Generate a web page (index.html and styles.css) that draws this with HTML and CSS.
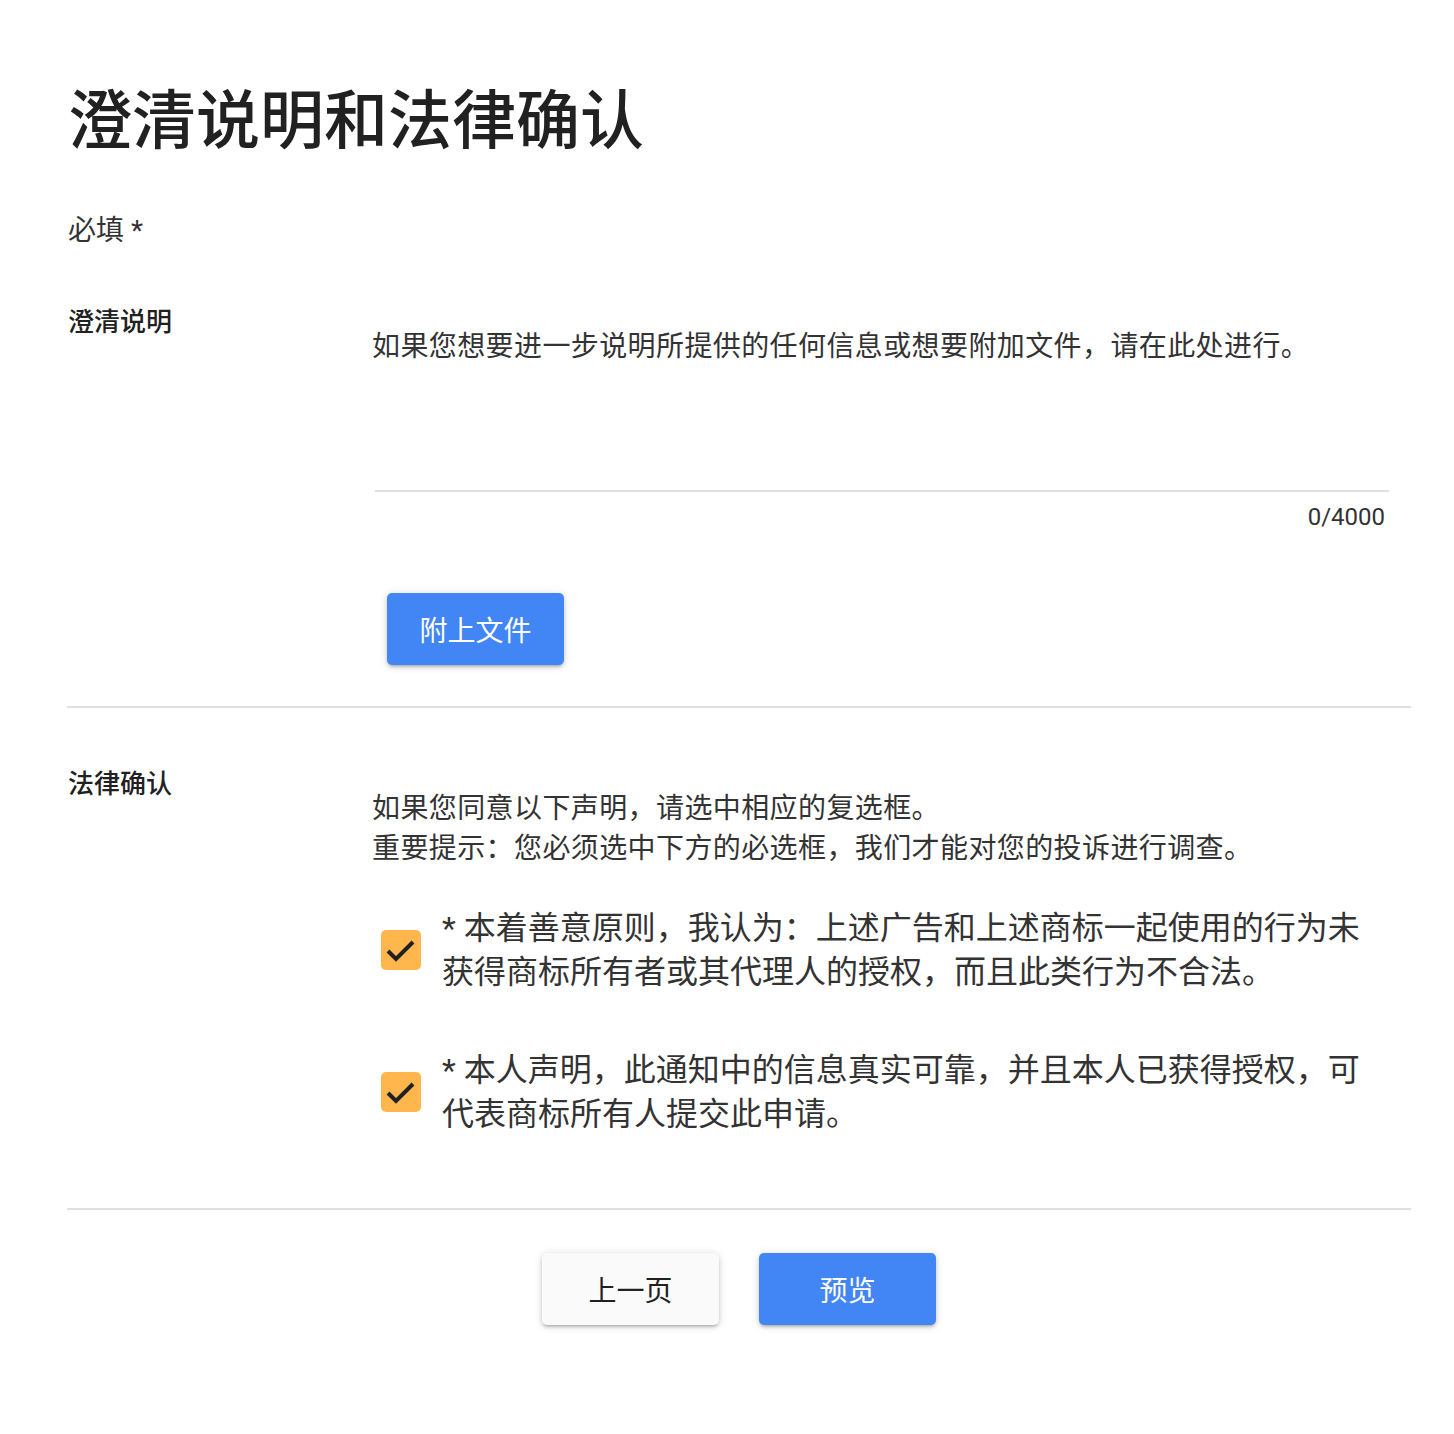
FILE: index.html
```html
<!DOCTYPE html>
<html lang="zh-CN">
<head>
    <meta charset="UTF-8">
    <meta name="viewport" content="width=device-width, initial-scale=1.0">
    <title>澄清说明和法律确认</title>
    <link rel="stylesheet" href="styles.css">
</head>
<body>
<main class="page">
    <h1 class="title">澄清说明和法律确认</h1>
    <p class="required">必填 *</p>

    <section class="row row-clarify">
        <h2 class="row-label">澄清说明</h2>
        <div class="row-body">
            <div class="textarea-field">
                <div class="placeholder">如果您想要进一步说明所提供的任何信息或想要附加文件，请在此处进行。</div>
            </div>
            <div class="counter">0/4000</div>
            <button class="btn btn-primary btn-attach" type="button">附上文件</button>
        </div>
    </section>

    <hr class="divider">

    <section class="row row-legal">
        <h2 class="row-label">法律确认</h2>
        <div class="row-body">
            <p class="hint">如果您同意以下声明，请选中相应的复选框。<br>重要提示：您必须选中下方的必选框，我们才能对您的投诉进行调查。</p>

            <label class="check-item">
                <span class="checkbox">
                    <svg viewBox="0 0 40 40" width="40" height="40"><path d="M7 21 L15 29 L32 12" fill="none" stroke="#212121" stroke-width="4"/></svg>
                </span>
                <span class="check-text">* 本着善意原则，我认为：上述广告和上述商标一起使用的行为未获得商标所有者或其代理人的授权，而且此类行为不合法。</span>
            </label>

            <label class="check-item">
                <span class="checkbox">
                    <svg viewBox="0 0 40 40" width="40" height="40"><path d="M7 21 L15 29 L32 12" fill="none" stroke="#212121" stroke-width="4"/></svg>
                </span>
                <span class="check-text">* 本人声明，此通知中的信息真实可靠，并且本人已获得授权，可代表商标所有人提交此申请。</span>
            </label>
        </div>
    </section>

    <hr class="divider">

    <div class="actions">
        <button class="btn btn-light" type="button">上一页</button>
        <button class="btn btn-primary" type="button">预览</button>
    </div>
</main>
</body>
</html>
```

FILE: styles.css
```css
* { margin: 0; padding: 0; box-sizing: border-box; }
body {
    font-family: Roboto, "Noto Sans CJK SC", sans-serif;
    color: #212121;
    background: #fff;
}
.page { padding: 82px 43px 80px 67px; }
.title {
    font-size: 64px;
    line-height: 80px;
    font-weight: 500;
    color: #212121;
    padding-left: 1px;
}
.required {
    margin-top: 49px;
    font-size: 28px;
    line-height: 40px;
    color: #333;
    padding-left: 1px;
}
.row { display: flex; }
.row-clarify { margin-top: 51px; padding-bottom: 41px; }
.row-legal { margin-top: 56px; padding-bottom: 72px; }
.row-label {
    width: 305px;
    flex-shrink: 0;
    padding-left: 1px;
    font-size: 26px;
    line-height: 40px;
    font-weight: 500;
    color: #212121;
}
.row-body {
    flex: 1;
    padding-top: 25px;
    padding-right: 22px;
}
.textarea-field {
    height: 165px;
    border-bottom: 2px solid #e0e0e0;
    margin-left: 3px;
}
.placeholder {
    margin-left: -3px;
    font-size: 28px;
    line-height: 40px;
    letter-spacing: 0.4px;
    color: #333;
}
.counter {
    margin-top: 9px;
    text-align: right;
    padding-right: 4px;
    font-size: 24px;
    line-height: 32px;
    color: #333;
}
.btn {
    width: 177px;
    height: 72px;
    border: none;
    border-radius: 5px;
    font-family: Roboto, "Noto Sans CJK SC", sans-serif;
    font-size: 28px;
    cursor: pointer;
    box-shadow: 0 3px 3px -2px rgba(0,0,0,0.2), 0 2px 4px 0 rgba(0,0,0,0.14), 0 1px 10px 0 rgba(0,0,0,0.12);
}
.btn-primary { background-color: #4285f4; color: #fff; }
.btn-light { background-color: #fafafa; color: #212121; }
.btn-attach { margin-top: 60px; margin-left: 15px; display: block; }
.divider {
    border: none;
    border-top: 2px solid #e0e0e0;
}
.hint {
    font-size: 28px;
    line-height: 40px;
    letter-spacing: 0.4px;
    color: #333;
}
.check-item {
    display: flex;
    align-items: center;
    margin-top: 37px;
    cursor: pointer;
}
.check-item + .check-item { margin-top: 54px; }
.checkbox {
    width: 40px;
    height: 40px;
    flex-shrink: 0;
    margin-left: 9px;
    margin-right: 21px;
    border-radius: 5px;
    background-color: #ffb74d;
}
.checkbox svg { display: block; }
.check-text {
    max-width: 930px;
    font-size: 32px;
    line-height: 44px;
    color: #333;
}
.actions {
    display: flex;
    justify-content: center;
    gap: 40px;
    margin-top: 43px;
}
```
